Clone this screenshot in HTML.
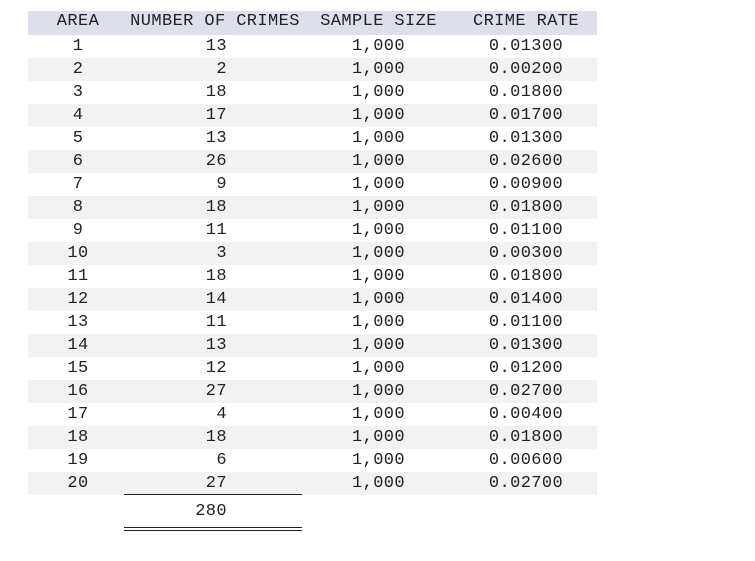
<!DOCTYPE html><html><head><style>
body{margin:0;width:755px;height:561px;background:#fff;position:relative;overflow:hidden;font-family:"Liberation Mono",monospace;font-size:17px;color:#222;letter-spacing:0.4px}
table{position:absolute;left:28px;top:11px;border-collapse:collapse}
td{height:23px;line-height:23px;padding:0;white-space:pre}
tr.h td{background:#dde0ea;height:24px;line-height:22px;vertical-align:top;text-align:center!important;padding:0!important}
tr:nth-child(odd):not(.h) td{background:#f2f2f2}
td:nth-child(1){width:100px;text-align:center}
td:nth-child(2){width:174px;text-align:right;padding-right:75px;box-sizing:border-box}
td:nth-child(3){width:153px;text-align:center}
td:nth-child(4){width:142px;text-align:center}
.l{position:absolute;left:124px;width:178px;height:1px;background:#222}
.t{position:absolute;left:124px;width:103px;text-align:right;top:500px;line-height:23px}
</style></head><body>
<table>
<tr class="h"><td>AREA</td><td>NUMBER OF CRIMES</td><td>SAMPLE SIZE</td><td>CRIME RATE</td></tr>
<tr><td>1</td><td>13</td><td>1,000</td><td>0.01300</td></tr>
<tr><td>2</td><td>2</td><td>1,000</td><td>0.00200</td></tr>
<tr><td>3</td><td>18</td><td>1,000</td><td>0.01800</td></tr>
<tr><td>4</td><td>17</td><td>1,000</td><td>0.01700</td></tr>
<tr><td>5</td><td>13</td><td>1,000</td><td>0.01300</td></tr>
<tr><td>6</td><td>26</td><td>1,000</td><td>0.02600</td></tr>
<tr><td>7</td><td>9</td><td>1,000</td><td>0.00900</td></tr>
<tr><td>8</td><td>18</td><td>1,000</td><td>0.01800</td></tr>
<tr><td>9</td><td>11</td><td>1,000</td><td>0.01100</td></tr>
<tr><td>10</td><td>3</td><td>1,000</td><td>0.00300</td></tr>
<tr><td>11</td><td>18</td><td>1,000</td><td>0.01800</td></tr>
<tr><td>12</td><td>14</td><td>1,000</td><td>0.01400</td></tr>
<tr><td>13</td><td>11</td><td>1,000</td><td>0.01100</td></tr>
<tr><td>14</td><td>13</td><td>1,000</td><td>0.01300</td></tr>
<tr><td>15</td><td>12</td><td>1,000</td><td>0.01200</td></tr>
<tr><td>16</td><td>27</td><td>1,000</td><td>0.02700</td></tr>
<tr><td>17</td><td>4</td><td>1,000</td><td>0.00400</td></tr>
<tr><td>18</td><td>18</td><td>1,000</td><td>0.01800</td></tr>
<tr><td>19</td><td>6</td><td>1,000</td><td>0.00600</td></tr>
<tr><td>20</td><td>27</td><td>1,000</td><td>0.02700</td></tr>
</table>
<div class="l" style="top:494px"></div>
<div class="t">280</div>
<div class="l" style="top:527px"></div>
<div class="l" style="top:530px"></div>
</body></html>
